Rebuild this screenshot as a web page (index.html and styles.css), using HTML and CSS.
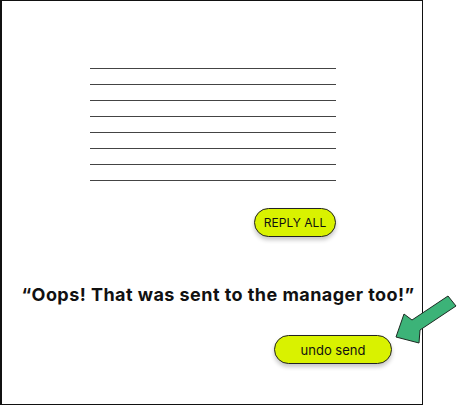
FILE: index.html
```html
<!DOCTYPE html>
<html lang="en">
<head>
<meta charset="utf-8">
<title>Undo send</title>
<link rel="stylesheet" href="styles.css">
</head>
<body>
<div class="frame">
  <div class="doc">
    <div class="lines">
      <div class="line"></div>
      <div class="line"></div>
      <div class="line"></div>
      <div class="line"></div>
      <div class="line"></div>
      <div class="line"></div>
      <div class="line"></div>
      <div class="line"></div>
    </div>
    <div class="reply-row"><button class="pill reply">REPLY ALL</button></div>
  </div>
  <p class="quote">“Oops! That was sent to the manager too!”</p>
  <div class="undo-row"><button class="pill undo">undo send</button></div>
</div>
<svg class="arrow" width="80" height="65" viewBox="0 0 80 65">
  <polygon points="11,52 19,29 27,35 63,11 71,21 35,45 34,58" fill="#3cb378" stroke="#1c2a22" stroke-width="1" stroke-linejoin="round"/>
</svg>
</body>
</html>
```
FILE: styles.css
```css
* { box-sizing: border-box; }
html, body { margin: 0; padding: 0; background: #fff; }
body { width: 465px; height: 406px; overflow: hidden; font-family: Inter, "Noto Sans", sans-serif; color: #111; }

.frame {
  width: 423px;
  height: 405px;
  border: 1px solid #111;
  border-left-width: 2px;
  display: flex;
  flex-direction: column;
}

.doc {
  margin-left: 88px;
  width: 246px;
  padding-top: 67px;
}

.lines {
  display: flex;
  flex-direction: column;
  gap: 15px;
}

.line {
  height: 1px;
  background: #444;
}

.reply-row {
  display: flex;
  justify-content: flex-end;
  margin-top: 27px;
}

.pill {
  background: #d9f200;
  border: 1px solid #222;
  border-radius: 15px;
  box-shadow: 0 3px 4px rgba(0, 0, 0, 0.22);
  font-family: Inter, "Noto Sans", sans-serif;
  color: #111;
  padding: 0;
  display: flex;
  align-items: center;
  justify-content: center;
}

.reply {
  width: 82px;
  height: 29px;
  font-size: 12px;
}

.quote {
  margin: 46px 0 0 0;
  padding-left: 12px;
  text-align: center;
  font-size: 18px;
  font-weight: 700;
  line-height: 24px;
  letter-spacing: 0.45px;
  white-space: nowrap;
}

.undo-row {
  display: flex;
  justify-content: flex-end;
  padding-right: 30px;
  margin-top: 28px;
}

.undo {
  width: 118px;
  height: 29px;
  font-size: 13px;
}

.arrow {
  position: absolute;
  left: 385px;
  top: 285px;
}
```
